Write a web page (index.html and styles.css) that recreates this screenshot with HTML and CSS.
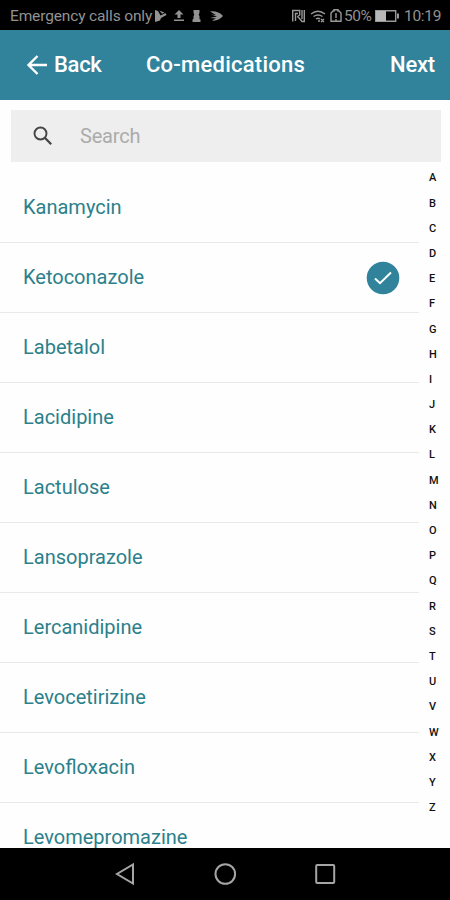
FILE: index.html
```html
<!DOCTYPE html>
<html lang="en">
<head>
<meta charset="utf-8">
<title>Co-medications</title>
<link rel="stylesheet" href="styles.css">
</head>
<body>
<div class="phone">
  <div class="status">
    <span class="carrier">Emergency calls only</span>
    <svg class="notices" width="72" height="18" viewBox="0 0 72 18" fill="#929292">
      <path d="M2 3l3 1 2.500 4.500 5-2.500 1 2-5.500 3-1 2.500-5 1.500z"/><path d="M6.500 3.500l5 2-2.500 1.300z"/>
      <path d="M26 3l4.500 4.500h-3v3.500h-3V7.500h-3zM21 12.500h10V14H21z"/>
      <path d="M40.500 3h6v2.500L45.700 8l.8 1v3l1 .5v2.500h-8v-2.500l1-.5V9l.8-1-.8-2.500z"/>
      <path d="M57 4.500q8-1 13 4.500-5 5.500-11 4.500l4-2-6-.5 7-1.500-6-2 5 .5z"/>
    </svg>
    <svg class="signals" width="54" height="18" viewBox="0 0 54 18" fill="none" stroke="#999" stroke-width="1.400">
      <path d="M1.700 14.500V3.500h7v4.500l-2 1.500 4 4.500M4.500 14V6.500h2.500M13.300 3v11.500h-3M11 3v9"/>
      <path d="M20 7q7-5.500 14 0M22.500 9.500q4.500-3 9 0M25 12q2-1.500 4 0M27 14h2M30 12l3 3M33 12l-3 3"/>
      <path d="M40 14.300V6l2-2h1V2.800h4V4h1l2 2v8.300zM45 6v5M45 12v1.500"/>
    </svg>
    <span class="percent">50%</span>
    <svg class="battery" width="27" height="18" viewBox="0 0 27 18">
      <path d="M1.700 3.700h20v10.500h-20z" fill="none" stroke="#999" stroke-width="1.400"/><path d="M2 4h10v10H2z" fill="#b8b8b8"/><path d="M23 6.500h2v5h-2z" fill="#999"/>
    </svg>
    <span class="clock">10:19</span>
  </div>
  <header class="bar">
    <svg class="arrow" width="22" height="22" viewBox="0 0 22 22" fill="none" stroke="#fff" stroke-width="2.400"><path d="M21 11H2.500M11.500 2l-9 9 9 9"/></svg>
    <span class="back">Back</span>
    <span class="title">Co-medications</span>
    <span class="next">Next</span>
  </header>
  <div class="search">
    <svg width="22" height="22" viewBox="0 0 22 22" fill="none" stroke="#444"><circle cx="8.500" cy="8.500" r="6" stroke-width="1.900"/><path d="M12.800 12.800l6.400 6.400" stroke-width="2.300"/></svg>
    <span class="hint">Search</span>
  </div>
  <main class="content">
    <ul class="list">
      <li><span>Kanamycin</span></li>
      <li><span>Ketoconazole</span><svg class="check" width="34" height="34" viewBox="0 0 34 34"><circle cx="17" cy="17" r="16.300" fill="#31839c"/><path d="M9 17.500l5 4.700L25 11.500" fill="none" stroke="#fff" stroke-width="2"/></svg></li>
      <li><span>Labetalol</span></li>
      <li><span>Lacidipine</span></li>
      <li><span>Lactulose</span></li>
      <li><span>Lansoprazole</span></li>
      <li><span>Lercanidipine</span></li>
      <li><span>Levocetirizine</span></li>
      <li><span>Levofloxacin</span></li>
      <li><span>Levomepromazine</span></li>
    </ul>
    <div class="index">
      <span>A</span><span>B</span><span>C</span><span>D</span><span>E</span><span>F</span><span>G</span><span>H</span><span>I</span><span>J</span><span>K</span><span>L</span><span>M</span><span>N</span><span>O</span><span>P</span><span>Q</span><span>R</span><span>S</span><span>T</span><span>U</span><span>V</span><span>W</span><span>X</span><span>Y</span><span>Z</span>
    </div>
  </main>
  <nav class="keys">
    <svg width="24" height="24" viewBox="0 0 24 24"><path d="M20 2.500v19L4 12z"/></svg>
    <svg width="24" height="24" viewBox="0 0 24 24"><circle cx="12.300" cy="12" r="9.800"/></svg>
    <svg width="24" height="24" viewBox="0 0 24 24"><rect x="3.200" y="3" width="18" height="18" rx="1"/></svg>
  </nav>
</div>
</body>
</html>
```
FILE: styles.css
```css
* { box-sizing: border-box; }
body { margin: 0; font-family: Roboto, sans-serif; }
.phone { width: 450px; height: 900px; display: flex; flex-direction: column; background: #fefefe; overflow: hidden; }
.status { height: 30px; flex: none; background: #000; color: #929292; display: flex; align-items: center; padding: 2px 9px 0 10px; font-size: 15.5px; white-space: nowrap; }
.carrier { width: 143px; letter-spacing: -0.14px; }
.notices { margin-left: 0; }
.signals { margin-left: auto; }
.percent { width: 29px; margin-left: -1px; font-size: 15.5px; letter-spacing: -0.5px; }
.battery { margin-left: 1px; }
.clock { width: 37px; margin-left: 3px; letter-spacing: -0.3px; }
.bar { height: 70px; flex: none; background: #31839c; color: #fff; display: flex; align-items: center; padding: 0 15px 2px 26px; font-size: 22px; font-weight: 500; white-space: nowrap; }
.arrow { margin-top: 2px; }
.back { margin-left: 6px; width: 48px; letter-spacing: -0.3px; }
.title { margin-left: 44px; letter-spacing: 0.25px; }
.next { margin-left: auto; letter-spacing: -0.2px; }
.search { height: 52px; flex: none; margin: 10px 9px 0 11px; background: #eee; display: flex; align-items: center; padding-left: 21px; }
.hint { margin-left: 26px; font-size: 20px; letter-spacing: -0.2px; color: #ababab; }
.content { flex: 1; min-height: 0; display: flex; overflow: hidden; padding-top: 10px; }
.list { margin: 0; padding: 1px 0 0; list-style: none; width: 419px; flex: none; }
.list li { height: 70.05px; border-bottom: 1.5px solid #e9e9e9; display: flex; align-items: center; justify-content: space-between; padding: 0 19px 0 23px; font-size: 20px; line-height: 24px; color: #2b808b; }
.list span { padding-bottom: 2px; }
.index { margin-top: -6.6px; padding-left: 10px; display: flex; flex-direction: column; font-size: 11px; font-weight: 500; color: #111; }
.index span { height: 25.2px; line-height: 25.2px; flex: none; }
.keys { height: 52px; flex: none; background: #000; display: flex; align-items: center; justify-content: center; gap: 76px; fill: none; stroke: #a5a5a5; stroke-width: 2; }
```
